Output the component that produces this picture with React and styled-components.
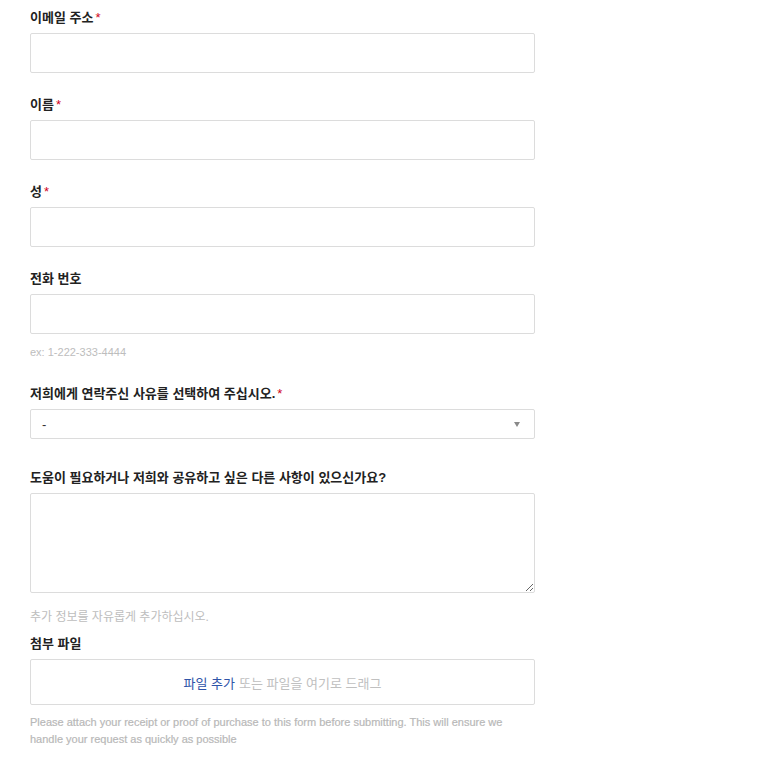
import React from "react";
import styled, { createGlobalStyle } from "styled-components";

const Global = createGlobalStyle`
  html, body { margin: 0; padding: 0; background: #fff; }
  body { font-family: "Liberation Sans", "Noto Sans CJK KR", sans-serif; color: #222; }
  * { box-sizing: border-box; }
`;

const Form = styled.form`
  width: 535px;
  padding: 8px 0 0 30px;
  display: flex;
  flex-direction: column;
`;

const Field = styled.div`
  display: flex;
  flex-direction: column;
  margin-bottom: ${(p) => p.$mb ?? 22}px;
`;

const Label = styled.label`
  font-size: 13px;
  line-height: 16px;
  padding-top: 2px;
  font-weight: 700;
  color: #222;
  margin-bottom: 7px;
`;

const Req = styled.span`
  color: #d0021b;
  margin-left: 2px;
  font-weight: 400;
`;

const Input = styled.input`
  height: 40px;
  width: 100%;
  border: 1px solid #dcdcdc;
  border-radius: 2px;
  padding: 0 10px;
  font: inherit;
  font-size: 13px;
  outline: none;
`;

const SelectBox = styled.div`
  position: relative;
  height: 30px;
  border: 1px solid #dcdcdc;
  border-radius: 2px;
  display: flex;
  align-items: center;
  justify-content: space-between;
  padding: 0 14px 0 11px;
  font-size: 13px;
  color: #333;
`;

const Caret = styled.span`
  width: 0;
  height: 0;
  border-left: 3px solid transparent;
  border-right: 3px solid transparent;
  border-top: 5px solid #8a8a8a;
`;

const TextArea = styled.textarea`
  height: 100px;
  width: 100%;
  border: 1px solid #dcdcdc;
  border-radius: 2px;
  padding: 8px 10px;
  font: inherit;
  font-size: 13px;
  outline: none;
  resize: vertical;
  display: block;
`;

const Hint = styled.div`
  font-size: ${(p) => p.$fs ?? 11}px;
  line-height: 15px;
  color: #bdbdbd;
  margin-top: ${(p) => p.$mt ?? 11}px;
`;

const Drop = styled.div`
  height: 46px;
  border: 1px solid #dcdcdc;
  border-radius: 2px;
  display: flex;
  align-items: center;
  justify-content: center;
  font-size: 13px;
  color: #c0c0c0;
  gap: 4px;
`;

const Link = styled.span`
  color: #2f54a8;
`;

const Note = styled.p`
  margin: 9px 0 0;
  font-size: 11px;
  line-height: 17px;
  color: #b8b8b8;
  font-weight: 400;
  -webkit-text-stroke: 0.2px #b8b8b8;
`;

export default function App() {
  return (
    <>
      <Global />
      <Form onSubmit={(e) => e.preventDefault()}>
        <Field>
          <Label>이메일 주소<Req>*</Req></Label>
          <Input type="email" />
        </Field>
        <Field>
          <Label>이름<Req>*</Req></Label>
          <Input type="text" />
        </Field>
        <Field>
          <Label>성<Req>*</Req></Label>
          <Input type="text" />
        </Field>
        <Field $mb={24}>
          <Label>전화 번호</Label>
          <Input type="tel" />
          <Hint>ex: 1-222-333-4444</Hint>
        </Field>
        <Field $mb={29}>
          <Label>저희에게 연락주신 사유를 선택하여 주십시오.<Req>*</Req></Label>
          <SelectBox>
            <span>-</span>
            <Caret />
          </SelectBox>
        </Field>
        <Field $mb={9}>
          <Label>도움이 필요하거나 저희와 공유하고 싶은 다른 사항이 있으신가요?</Label>
          <TextArea />
          <Hint $mt={17} $fs={12}>추가 정보를 자유롭게 추가하십시오.</Hint>
        </Field>
        <Field $mb={0}>
          <Label>첨부 파일</Label>
          <Drop>
            <Link>파일 추가</Link>
            <span>또는 파일을 여기로 드래그</span>
          </Drop>
          <Note>
            Please attach your receipt or proof of purchase to this form before submitting. This will ensure we handle your request as quickly as possible
          </Note>
        </Field>
      </Form>
    </>
  );
}
